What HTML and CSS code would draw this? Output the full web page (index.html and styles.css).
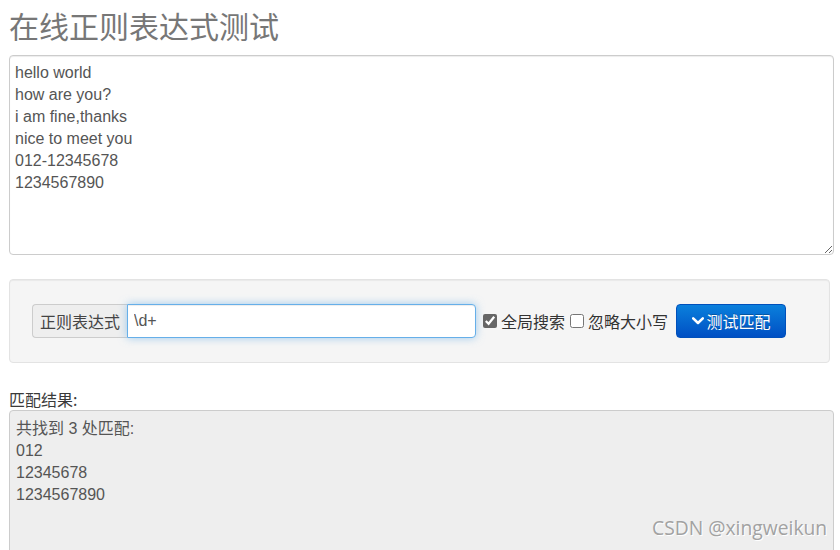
FILE: index.html
```html
<!DOCTYPE html>
<html lang="zh-CN">
<head>
<meta charset="utf-8">
<title>在线正则表达式测试</title>
<link rel="stylesheet" href="styles.css">
</head>
<body>
<div class="page">
<h1 class="title">在线正则表达式测试</h1>
<textarea class="source" spellcheck="false">hello world
how are you?
i am fine,thanks
nice to meet you
012-12345678
1234567890</textarea>

<div class="well">
	<div class="input-group">
		<span class="addon">正则表达式</span>
		<input class="regex" type="text" value="\d+" spellcheck="false">
	</div>
	<label class="check"><input type="checkbox" checked>全局搜索</label>
	<label class="check"><input type="checkbox">忽略大小写</label>
	<button class="btn-primary" type="button"><svg class="chevron" width="12" height="10" viewBox="0 0 12 10"><path d="M1.2 2.4 L6 7 L10.8 2.4" fill="none" stroke="#fff" stroke-width="2.6" stroke-linecap="round" stroke-linejoin="round"/></svg>测试匹配</button>
</div>

<div class="result-label">匹配结果:</div>
<div class="result">共找到 3 处匹配:<br>012<br>12345678<br>1234567890</div>

<div class="watermark">CSDN @xingweikun</div>
</div>
</body>
</html>
```

FILE: styles.css
```css
html, body {
	margin: 0;
	padding: 0;
	background: #fff;
	overflow: hidden;
}
.page {
	padding: 0 6px 0 9px;
	font-family: "Liberation Sans", "Noto Sans CJK SC", sans-serif;
	font-size: 16px;
	color: #333;
}
.title {
	font-family: "Noto Sans CJK SC", sans-serif;
	font-size: 30px;
	font-weight: normal;
	line-height: 33px;
	color: #777;
	margin: 9px 0 13px 0;
}
.source {
	display: block;
	box-sizing: border-box;
	width: 825px;
	height: 200px;
	margin: 0 0 24px 0;
	padding: 6px 5px 4px 5px;
	border: 1px solid #ccc;
	border-radius: 4px;
	font-family: "Liberation Sans", "Noto Sans CJK SC", sans-serif;
	font-size: 16px;
	line-height: 22px;
	color: #555;
	resize: both;
	outline: none;
	box-shadow: inset 0 1px 1px rgba(0, 0, 0, .075);
}
.well {
	box-sizing: border-box;
	width: 821px;
	height: 84px;
	padding: 0 22px;
	background: #f5f5f5;
	border: 1px solid #e3e3e3;
	border-radius: 4px;
	box-shadow: inset 0 1px 1px rgba(0, 0, 0, .05);
	display: flex;
	align-items: center;
}
.input-group {
	display: flex;
	height: 34px;
}
.addon {
	box-sizing: border-box;
	width: 95px;
	padding: 0 6px;
	display: flex;
	align-items: center;
	justify-content: center;
	font-family: "Noto Sans CJK SC", sans-serif;
	font-size: 16px;
	color: #444;
	background: #eee;
	border: 1px solid #ccc;
	border-right: 0;
	border-radius: 4px 0 0 4px;
}
.regex {
	box-sizing: border-box;
	width: 349px;
	height: 34px;
	margin: 0;
	padding: 0 6px;
	font-family: "Liberation Sans", sans-serif;
	font-size: 16px;
	color: #555;
	border: 1px solid #66afe9;
	border-radius: 0 4px 4px 0;
	outline: none;
	box-shadow: inset 0 1px 1px rgba(0, 0, 0, .075), 0 0 8px rgba(102, 175, 233, .6);
}
.check {
	display: flex;
	align-items: center;
	font-family: "Noto Sans CJK SC", sans-serif;
	font-size: 16px;
	color: #333;
	margin-left: 7px;
}
.check + .check {
	margin-left: 5px;
}
.check input {
	width: 14px;
	height: 14px;
	margin: 0 4px 0 0;
	accent-color: #666;
}
.btn-primary {
	box-sizing: border-box;
	width: 110px;
	height: 34px;
	margin-left: 8px;
	display: flex;
	align-items: center;
	justify-content: center;
	gap: 3px;
	font-family: "Noto Sans CJK SC", sans-serif;
	font-size: 16px;
	color: #fff;
	background: linear-gradient(to bottom, #0a80dc, #0050c4);
	border: 1px solid #0050bb;
	border-radius: 4px;
	text-shadow: 0 -1px 0 rgba(0, 0, 0, .25);
	padding: 0;
}
.chevron {
	display: block;
}
.result-label {
	font-family: "Noto Sans CJK SC", sans-serif;
	font-size: 16px;
	line-height: 20px;
	color: #3a3a3a;
	margin: 26px 0 1px 0;
}
.result {
	box-sizing: border-box;
	width: 825px;
	height: 170px;
	padding: 7px 6px;
	background: #eee;
	border: 1px solid #ccc;
	border-radius: 4px;
	font-size: 16px;
	line-height: 22px;
	color: #555;
}
.watermark {
	position: absolute;
	left: 652px;
	top: 514px;
	font-family: "Open Sans", "Noto Sans", sans-serif;
	font-size: 19.3px;
	color: #a2a2a2;
	text-shadow: 1px 1px 0 #fff;
}
```
